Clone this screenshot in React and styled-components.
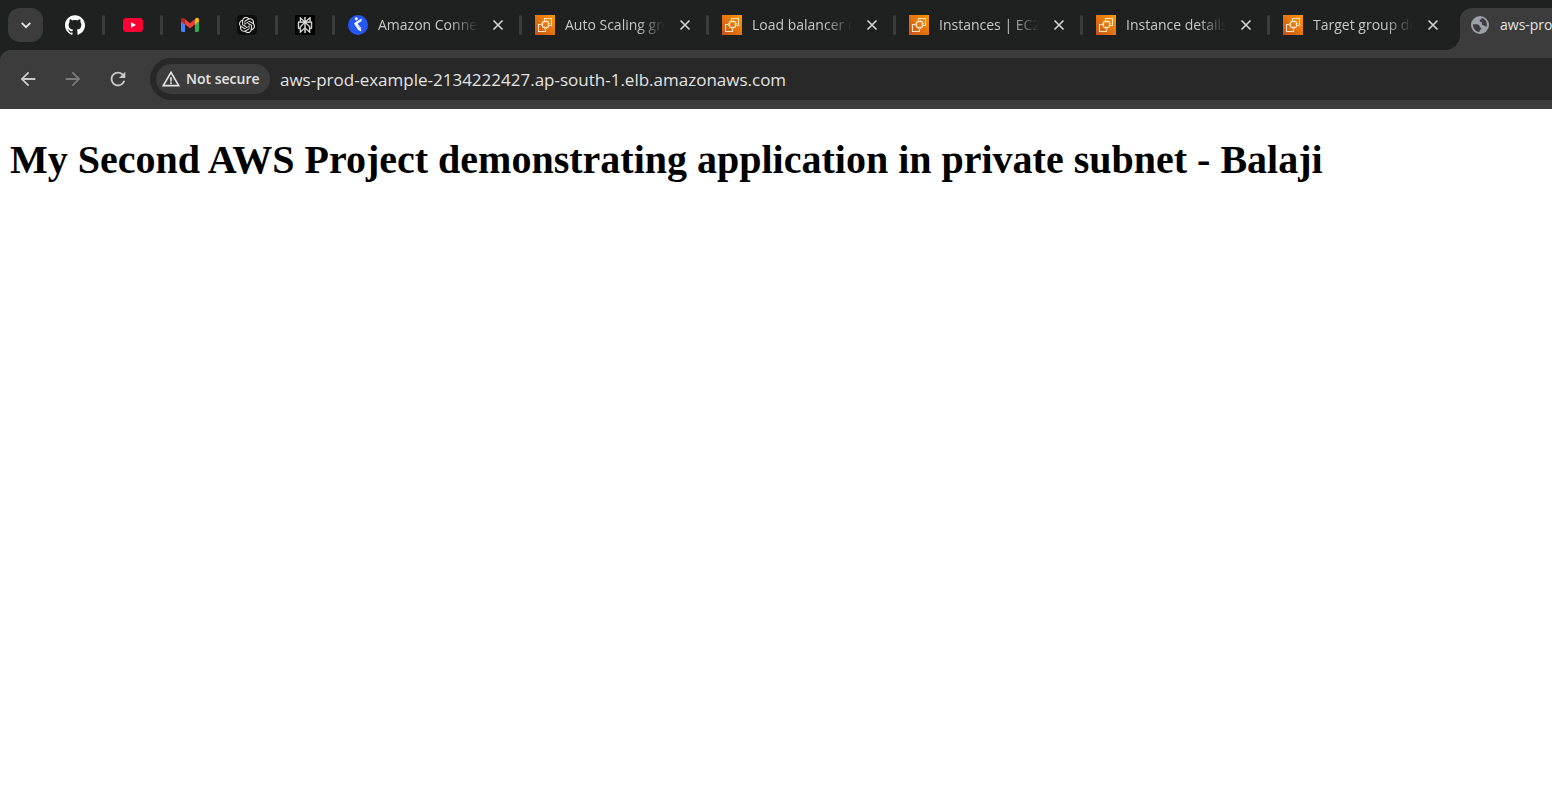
import React from "react";
import styled, { createGlobalStyle } from "styled-components";
import { SiGithub, SiOpenai, SiPerplexity } from "react-icons/si";
import { MdArrowBack, MdArrowForward, MdRefresh, MdWarningAmber } from "react-icons/md";

const colors = {
  strip: "#1f2120",
  toolbar: "#3c3c3c",
  field: "#282828",
  text: "#c7c7c7",
  bright: "#e3e3e3",
};

const GlobalStyle = createGlobalStyle`
  *, *::before, *::after { box-sizing: border-box; }
  body { margin: 0; background: #fff; overflow-x: hidden; }
  button, input { font: inherit; color: inherit; border: 0; padding: 0; background: none; }
  svg { display: block; flex: none; }
`;

const Browser = styled.div`
  font-family: "Open Sans", "Noto Sans", sans-serif;
  color: ${colors.text};
`;

const TabStrip = styled.nav`
  display: flex;
  height: 50px;
  background: ${colors.strip};
  overflow: hidden;
`;

const TabSearch = styled.button`
  flex: none;
  display: grid;
  place-items: center;
  width: 35px;
  height: 34px;
  margin: 8px 5px 0 8px;
  border-radius: 12px;
  background: ${colors.toolbar};
  color: ${colors.bright};
`;

const TabGroup = styled.div`
  flex: 0 0 ${(p) => p.$basis}px;
  min-width: 0;
  display: flex;
`;

const Separator = styled.span`
  flex: none;
  width: 3px;
  height: 20px;
  border-radius: 2px;
  background: ${(p) => (p.$hidden ? "transparent" : colors.toolbar)};
`;

const PinnedTab = styled.div`
  flex: 1;
  display: flex;
  align-items: center;
`;

const PinnedButton = styled.button`
  flex: 1;
  display: grid;
  place-items: center;
`;

const DarkBadge = styled.span`
  display: grid;
  place-items: center;
  width: 20px;
  height: 20px;
  border-radius: ${(p) => p.$radius}px;
  background: ${(p) => p.$bg};
  color: #e8e8e4;
`;

const Tab = styled.div`
  flex: 1;
  min-width: 0;
  display: flex;
  align-items: center;
  padding-left: 13px;
`;

const TabLink = styled.a`
  flex: 1;
  min-width: 0;
  display: flex;
  align-items: center;
  gap: 10px;
  color: inherit;
  text-decoration: none;
`;

const TabTitle = styled.span`
  flex: 1;
  min-width: 0;
  overflow: hidden;
  white-space: nowrap;
  font-size: 14px;
  line-height: 20px;
  mask-image: ${(p) => (p.$fade ? "linear-gradient(to left, transparent, #000 28px)" : "none")};
`;

const CloseButton = styled.button`
  flex: none;
  display: grid;
  place-items: center;
  width: 20px;
  height: 20px;
  margin: 0 11px 0 10px;
`;

const ActiveTab = styled.div`
  position: relative;
  flex: 1;
  min-width: 0;
  display: flex;
  align-items: center;
  margin: 8px 0 0 3px;
  padding: 0 0 8px 10px;
  border-radius: 12px 0 0 0;
  background: ${colors.toolbar};
  color: ${colors.bright};

  &::before {
    content: "";
    position: absolute;
    right: 100%;
    bottom: 0;
    width: 15px;
    height: 15px;
    background: radial-gradient(circle at 0 0, transparent 15px, ${colors.toolbar} 15px);
  }
`;

const ToolbarBack = styled.div`
  background: ${colors.strip};
`;

const Toolbar = styled.header`
  display: flex;
  align-items: center;
  height: 59px;
  padding: 0 0 1px 16px;
  border-radius: 10px 0 0 0;
  background: ${colors.toolbar};
`;

const NavButtons = styled.div`
  display: flex;
  gap: 21px;
  margin-right: 20px;
`;

const NavButton = styled.button`
  display: grid;
  place-items: center;
  width: 24px;
  height: 24px;
  color: ${(p) => (p.disabled ? "#7b7b7b" : "#c9c9c9")};
`;

const AddressBar = styled.div`
  flex: 1;
  min-width: 0;
  display: flex;
  align-items: center;
  height: 42px;
  padding-left: 6px;
  border-radius: 21px 0 0 21px;
  background: ${colors.field};
  color: ${colors.bright};
`;

const SecurityChip = styled.button`
  flex: none;
  display: flex;
  align-items: center;
  gap: 5px;
  width: 114px;
  height: 30px;
  padding-left: 5px;
  border-radius: 15px;
  background: ${colors.toolbar};
  font-size: 14px;
  font-weight: 600;
  line-height: 20px;
  white-space: nowrap;
`;

const AddressInput = styled.input`
  flex: 1;
  min-width: 0;
  height: 30px;
  margin-left: 10px;
  font-size: 17px;
  outline: none;
`;

const Page = styled.main`
  padding: 28px 10px;
  color: #000;
  font-family: "Liberation Serif", "Times New Roman", serif;
`;

const Heading = styled.h1`
  margin: 0;
  font-size: 40px;
  line-height: 46px;
  font-weight: 700;
`;

const YoutubeIcon = () => (
  <svg width="20" height="20" viewBox="0 0 20 20" aria-hidden="true">
    <rect y="3" width="20" height="14" rx="3.5" fill="#ff0033" />
    <path d="M8 7.2v5.6l5-2.8z" fill="#fff" />
  </svg>
);

const GmailIcon = () => (
  <svg width="20" height="20" viewBox="0 0 20 20" aria-hidden="true">
    <path d="M1 6v9.6c0 .8.6 1.4 1.4 1.4H5V9z" fill="#4285f4" />
    <path d="M19 6v9.6c0 .8-.6 1.4-1.4 1.4H15V9z" fill="#34a853" />
    <path d="M15 4.4V9.500l4-3V5c0-1.900-2-2.700-3.300-1.700z" fill="#fbbc04" />
    <path d="M5 9.500V4.300l5 3.900 5-3.900v5.200l-5 3.800z" fill="#ea4335" />
    <path d="M1 5v1.500l4 3V4.300l-.9-.9C2.800 2.400 1 3.300 1 5z" fill="#c5221f" />
  </svg>
);

const ConnectIcon = () => (
  <svg width="20" height="20" viewBox="0 0 20 20" aria-hidden="true">
    <circle cx="10" cy="10" r="10" fill="#2458f5" />
    <circle cx="8.300" cy="3.800" r="1.500" fill="#fff" />
    <path d="M13.500 3.400v2.700L9.600 8.700l3.500 4.200v3.700l-3-1.900-3.500-5.200c-.5-.8-.2-1.400.4-1.900z" fill="#fff" />
    <path d="M9.600 10.500l3.500 3.700" stroke="#9eb5fb" strokeWidth="1" />
  </svg>
);

const Ec2Icon = () => (
  <svg width="20" height="20" viewBox="0 0 20 20" aria-hidden="true">
    <defs>
      <linearGradient id="ec2" x1="0" y1="1" x2="1" y2="0">
        <stop offset="0" stopColor="#c8511b" />
        <stop offset="1" stopColor="#f90" />
      </linearGradient>
    </defs>
    <rect width="20" height="20" fill="url(#ec2)" />
    <g fill="none" stroke="#ffe3c0" strokeWidth="1.100">
      <rect x="7.500" y="6.500" width="6" height="6" rx="1.500" strokeWidth="1.300" />
      <path d="M9.500 5.500v-2h7v7h-2.500M6.500 9.500h-3v7h7V14" />
      <path d="M9.500 5v1.500M11.500 5v1.500M13.500 8.500H15M13.500 10.500H15M9.500 12.500V14M11.500 12.500V14M6 8.500h1.500M6 10.500h1.500" strokeWidth=".7" />
    </g>
  </svg>
);

const GlobeIcon = () => (
  <svg width="20" height="20" viewBox="0 0 20 20" aria-hidden="true">
    <circle cx="10" cy="10" r="9" fill="#9aa0a6" />
    <path
      d="M3 9.300h3.600c1.700 0 3.200 1 3.200 2.500 0 .8 1.400.7 1.400 1.900 0 1-1.600 1.100-1.600 2.300v1C6 17 3 14 3 9.300z"
      fill={colors.toolbar}
    />
    <path
      d="M11.600 3.100c.2 1.500-1.900 1.600-1.900 2.800 0 1 1.200 1.200 2.200 1.200.2 1.300-.6 2.900 1.200 3.200 1.500.2 1.800 1.400 3.500 1.300C17.600 8 16 4 11.600 3.100z"
      fill={colors.toolbar}
    />
  </svg>
);

const CloseIcon = () => (
  <svg width="12" height="12" viewBox="0 0 12 12" aria-hidden="true">
    <path d="M1.500 1.500l9 9M10.500 1.500l-9 9" stroke="#d0d0d0" strokeWidth="1.700" fill="none" />
  </svg>
);

const ChevronIcon = () => (
  <svg width="12" height="12" viewBox="0 0 12 12" aria-hidden="true">
    <path d="M1.700 3.800L6 8.100l4.300-4.300" stroke="currentColor" strokeWidth="1.900" fill="none" />
  </svg>
);

const pinned = [
  { name: "GitHub", icon: <SiGithub size={20} color="#fff" /> },
  { name: "YouTube", icon: <YoutubeIcon /> },
  { name: "Gmail", icon: <GmailIcon /> },
  { name: "ChatGPT", icon: <DarkBadge $radius={4} $bg="#0d0d0d"><SiOpenai size={16} /></DarkBadge> },
  {
    name: "Perplexity",
    icon: <DarkBadge $radius={1} $bg="#000"><SiPerplexity size={16} stroke="currentColor" strokeWidth={0.8} /></DarkBadge>,
  },
];

const tabs = [
  { title: "Amazon Connect", icon: <ConnectIcon /> },
  { title: "Auto Scaling groups", icon: <Ec2Icon /> },
  { title: "Load balancer details", icon: <Ec2Icon /> },
  { title: "Instances | EC2", icon: <Ec2Icon /> },
  { title: "Instance details", icon: <Ec2Icon /> },
  { title: "Target group details", icon: <Ec2Icon /> },
];

export default function App() {
  return (
    <>
      <GlobalStyle />
      <Browser>
        <TabStrip aria-label="Tabs">
          <TabSearch aria-label="Search tabs"><ChevronIcon /></TabSearch>
          <TabGroup $basis={287}>
            {pinned.map((tab) => (
              <PinnedTab key={tab.name}>
                <PinnedButton aria-label={tab.name}>{tab.icon}</PinnedButton>
                <Separator />
              </PinnedTab>
            ))}
          </TabGroup>
          <TabGroup $basis={1122}>
            {tabs.map((tab, i) => (
              <Tab key={tab.title}>
                <TabLink href="#">
                  {tab.icon}
                  <TabTitle $fade>{tab.title}</TabTitle>
                </TabLink>
                <CloseButton aria-label={`Close ${tab.title}`}><CloseIcon /></CloseButton>
                <Separator $hidden={i === tabs.length - 1} />
              </Tab>
            ))}
          </TabGroup>
          <ActiveTab>
            <TabLink href="#">
              <GlobeIcon />
              <TabTitle>aws-prod-example</TabTitle>
            </TabLink>
          </ActiveTab>
        </TabStrip>
        <ToolbarBack>
          <Toolbar>
            <NavButtons>
              <NavButton aria-label="Back"><MdArrowBack size={22} /></NavButton>
              <NavButton aria-label="Forward" disabled><MdArrowForward size={22} /></NavButton>
              <NavButton aria-label="Reload"><MdRefresh size={22} /></NavButton>
            </NavButtons>
            <AddressBar>
              <SecurityChip><MdWarningAmber size={20} />Not secure</SecurityChip>
              <AddressInput
                aria-label="Address"
                defaultValue="aws-prod-example-2134222427.ap-south-1.elb.amazonaws.com"
              />
            </AddressBar>
          </Toolbar>
        </ToolbarBack>
      </Browser>
      <Page>
        <Heading>My Second AWS Project demonstrating application in private subnet - Balaji</Heading>
      </Page>
    </>
  );
}
